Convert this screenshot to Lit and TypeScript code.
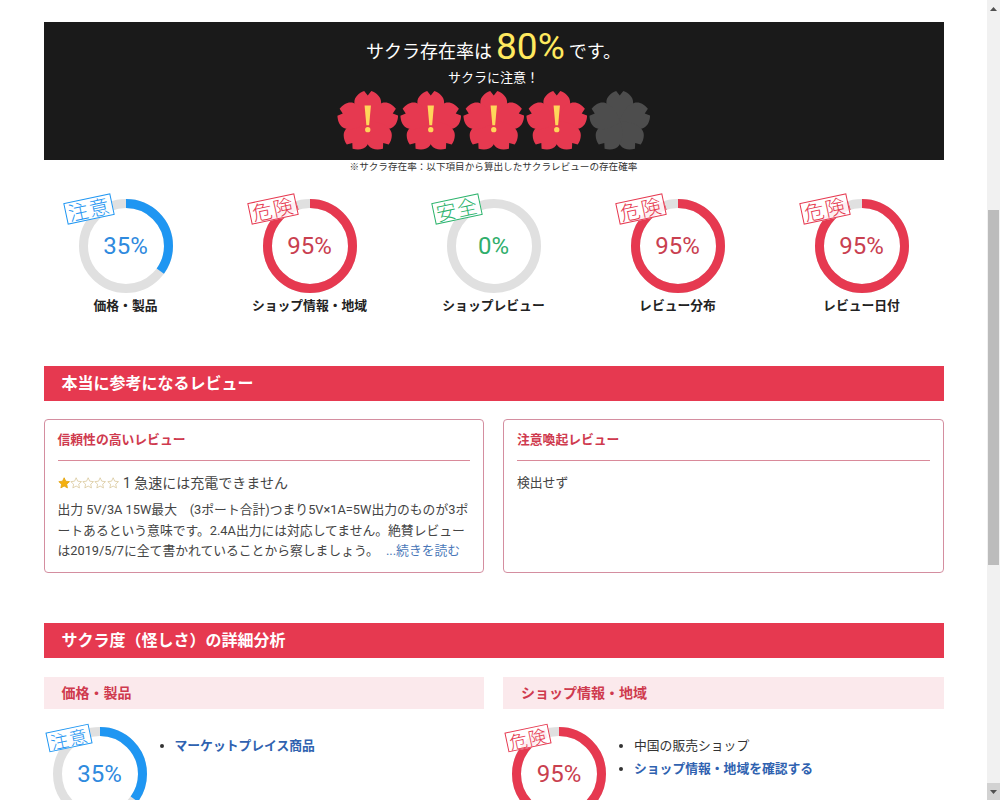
import { LitElement, html, css, svg } from 'lit';
import { customElement, property } from 'lit/decorators.js';

type Level = 'caution' | 'danger' | 'safe';

const LEVEL_LABEL: Record<Level, string> = {
  caution: '注意',
  danger: '危険',
  safe: '安全',
};

const SCORES: { label: string; value: number; level: Level }[] = [
  { label: '価格・製品', value: 35, level: 'caution' },
  { label: 'ショップ情報・地域', value: 95, level: 'danger' },
  { label: 'ショップレビュー', value: 0, level: 'safe' },
  { label: 'レビュー分布', value: 95, level: 'danger' },
  { label: 'レビュー日付', value: 95, level: 'danger' },
];

const PETAL = 'M0 1C-6-4-13.5-11-13.5-19.5C-13.5-25-9-29-3.6-31L0-26.5L3.6-31C9-29 13.5-25 13.5-19.5C13.5-11 6-4 0 1Z';

@customElement('score-gauge')
export class ScoreGauge extends LitElement {
  @property({ type: Number }) value = 0;
  @property({ type: String }) level: Level = 'safe';
  @property({ type: Boolean, reflect: true }) small = false;

  static styles = css`
    :host {
      display: block;
      width: 94px;
      height: 94px;
      position: relative;
      --accent: #2cb36c;
      --text: #2fae6b;
    }
    :host([level='caution']) {
      --accent: #1f96f2;
      --text: #2f8ade;
    }
    :host([level='danger']) {
      --accent: #e63950;
      --text: #c9404f;
    }
    .dial {
      display: grid;
      place-items: center;
      width: 94px;
      height: 94px;
    }
    .dial > * {
      grid-area: 1 / 1;
    }
    svg {
      display: block;
    }
    .track {
      stroke: #e0e0e0;
    }
    .arc {
      stroke: var(--accent);
    }
    .num {
      font-size: 24px;
      color: var(--text);
    }
    .stamp {
      position: absolute;
      left: -14px;
      top: -1px;
      width: 48px;
      height: 22px;
      box-sizing: border-box;
      border: 1px solid var(--accent);
      background: rgba(255, 255, 255, 0.92);
      color: var(--accent);
      font-size: 20px;
      font-weight: 300;
      line-height: 20px;
      text-align: center;
      letter-spacing: 1px;
      transform: rotate(-12deg);
      font-family: 'Noto Sans CJK JP', sans-serif;
    }
    :host([small]) .stamp {
      left: -6px;
      top: 1px;
      width: 44px;
      height: 20px;
      font-size: 18px;
      line-height: 18px;
    }
  `;

  render() {
    const len = 2 * Math.PI * 42.5;
    return html`
      <div class="dial">
        <svg width="94" height="94" viewBox="0 0 94 94" fill="none" stroke-width="9">
          <circle class="track" cx="47" cy="47" r="42.5"></circle>
          <circle
            class="arc"
            cx="47"
            cy="47"
            r="42.5"
            transform="rotate(-90 47 47)"
            stroke-dasharray="${(len * this.value) / 100} ${len}"
          ></circle>
        </svg>
        <span class="num">${this.value}%</span>
      </div>
      <div class="stamp">${LEVEL_LABEL[this.level]}</div>
    `;
  }
}

@customElement('app-root')
export class AppRoot extends LitElement {
  static styles = css`
    :host {
      display: flex;
      height: 800px;
      overflow: hidden;
      background: #fff;
      color: #333;
      font-family: Roboto, 'Noto Sans CJK JP', sans-serif;
      font-size: 12.8px;
    }
    .page {
      flex: 1;
      min-width: 0;
      overflow: hidden;
    }
    .inner {
      width: 900px;
      margin: 0 auto;
      padding-top: 22px;
    }
    .scrollbar {
      width: 13px;
      flex: none;
      display: flex;
      flex-direction: column;
      background: #f1f1f1;
    }
    .sb-btn {
      height: 17px;
      display: flex;
      align-items: center;
      justify-content: center;
      flex: none;
    }
    .sb-btn.down {
      background: #d2d2d2;
    }
    .sb-track {
      flex: 1;
      padding: 193px 1px 0;
    }
    .sb-thumb {
      height: 355px;
      background: #bcbcbc;
    }

    .banner {
      background: #1a1a1a;
      height: 138px;
      box-sizing: border-box;
      padding-top: 4px;
      color: #fff;
      text-align: center;
    }
    .headline {
      font-size: 18px;
      line-height: 42px;
      height: 42px;
    }
    .headline b {
      font-size: 37px;
      font-weight: 400;
      color: #ffe95f;
      margin: 0 4px;
      vertical-align: -1px;
    }
    .verdict {
      font-size: 13px;
      line-height: 20px;
    }
    .flowers {
      display: flex;
      justify-content: center;
      gap: 1.5px;
      margin-top: 3px;
    }
    .flowers svg {
      display: block;
    }
    .note {
      font-size: 9.6px;
      line-height: 13px;
      text-align: center;
      color: #333;
    }

    .scores {
      display: grid;
      grid-template-columns: repeat(5, 1fr);
      margin: 26px -10px 0;
    }
    .score {
      display: flex;
      flex-direction: column;
      align-items: center;
    }
    .score-label {
      margin-top: 6px;
      font-weight: 700;
      line-height: 14px;
      color: #222;
    }

    h2 {
      margin: 0;
      background: #e63950;
      color: #fff;
      font-size: 16px;
      font-weight: 700;
      line-height: 35px;
      padding-left: 18px;
    }
    .reviews-head {
      margin-top: 53px;
    }
    .detail-head {
      margin-top: 50px;
    }
    .two {
      display: grid;
      grid-template-columns: 1fr 1fr;
      gap: 19px;
    }
    .cards {
      margin-top: 18px;
    }
    .card {
      border: 1px solid #d48ea0;
      border-radius: 4px;
      height: 154px;
      box-sizing: border-box;
      padding: 0 13px;
    }
    .card h3 {
      margin: 0;
      font-size: 12.8px;
      font-weight: 700;
      color: #cf3a4e;
      line-height: 40px;
      border-bottom: 1px solid #d98a9a;
    }
    .review-title {
      display: flex;
      align-items: center;
      gap: 4px;
      margin-top: 11px;
      font-size: 14px;
      line-height: 22px;
      color: #444;
    }
    .stars {
      display: flex;
    }
    .stars svg {
      display: block;
    }
    .review-body {
      margin: 6px 0 0;
      line-height: 20.5px;
      color: #444;
    }
    .review-body a {
      color: #4a77b8;
      text-decoration: none;
      margin-left: 4px;
    }
    .none {
      margin: 11px 0 0;
      line-height: 22px;
      color: #444;
    }

    .details {
      margin-top: 19px;
    }
    .detail-title {
      background: #fbe9ec;
      color: #cf3a4e;
      font-size: 14px;
      font-weight: 700;
      line-height: 32px;
      padding-left: 18px;
    }
    .detail-body {
      display: flex;
      gap: 10px;
      padding: 18px 0 0 9px;
    }
    ul {
      margin: 7px 0 0;
      padding: 0 0 0 18px;
      list-style: disc;
      line-height: 23px;
    }
    ul a {
      color: #2f62b0;
      font-weight: 700;
      text-decoration: none;
    }
  `;

  flower(on: boolean) {
    const angles = [0, 72, 144, 216, 288];
    return html`<svg width="61.5" height="59" viewBox="-31 -31 62 59.5">
      ${angles.map(
        (a) => svg`<path d=${PETAL} transform="rotate(${a})" fill=${on ? '#e63950' : '#4d4d4d'}></path>`
      )}
      ${on
        ? svg`<path d="M-3.2-16.5H3.2L1.4 3.5H-1.4Z" fill="#ffd65a"></path>
            <circle cy="8" r="2.7" fill="#ffd65a"></circle>`
        : ''}
    </svg>`;
  }

  star(filled: boolean) {
    return html`<svg width="12.3" height="12" viewBox="0 0 24 24">
      <path
        d="M12 1.5l3.2 6.9 7.5.9-5.6 5.1 1.5 7.4L12 18.1l-6.6 3.7 1.5-7.4-5.6-5.1 7.5-.9z"
        fill=${filled ? '#f4b00f' : '#fff'}
        stroke=${filled ? '#e2a20c' : '#d9c89c'}
        stroke-width="1.6"
      ></path>
    </svg>`;
  }

  render() {
    return html`
      <div class="page">
        <div class="inner">
          <section class="banner">
            <div class="headline">サクラ存在率は<b>80%</b>です。</div>
            <div class="verdict">サクラに注意！</div>
            <div class="flowers">${[1, 1, 1, 1, 0].map((f) => this.flower(!!f))}</div>
          </section>
          <div class="note">※サクラ存在率：以下項目から算出したサクラレビューの存在確率</div>

          <div class="scores">
            ${SCORES.map(
              (s) => html`
                <div class="score">
                  <score-gauge .value=${s.value} level=${s.level}></score-gauge>
                  <div class="score-label">${s.label}</div>
                </div>
              `
            )}
          </div>

          <h2 class="reviews-head">本当に参考になるレビュー</h2>
          <div class="two cards">
            <div class="card">
              <h3>信頼性の高いレビュー</h3>
              <div class="review-title">
                <span class="stars">${[1, 0, 0, 0, 0].map((f) => this.star(!!f))}</span>
                <span>1 急速には充電できません</span>
              </div>
              <p class="review-body">
                出力 5V/3A 15W最大　(3ポート合計)つまり5V×1A=5W出力のものが3ポートあるという意味です。2.4A出力には対応してません。絶賛レビューは2019/5/7に全て書かれていることから察しましょう。
                <a href="#">...続きを読む</a>
              </p>
            </div>
            <div class="card">
              <h3>注意喚起レビュー</h3>
              <p class="none">検出せず</p>
            </div>
          </div>

          <h2 class="detail-head">サクラ度（怪しさ）の詳細分析</h2>
          <div class="two details">
            <div>
              <div class="detail-title">価格・製品</div>
              <div class="detail-body">
                <score-gauge small .value=${35} level="caution"></score-gauge>
                <ul>
                  <li><a href="#">マーケットプレイス商品</a></li>
                </ul>
              </div>
            </div>
            <div>
              <div class="detail-title">ショップ情報・地域</div>
              <div class="detail-body">
                <score-gauge small .value=${95} level="danger"></score-gauge>
                <ul>
                  <li>中国の販売ショップ</li>
                  <li><a href="#">ショップ情報・地域を確認する</a></li>
                </ul>
              </div>
            </div>
          </div>
        </div>
      </div>
      <div class="scrollbar">
        <div class="sb-btn">
          <svg width="7" height="4" viewBox="0 0 7 4"><path d="M3.5 0L7 4H0Z" fill="#505050"></path></svg>
        </div>
        <div class="sb-track"><div class="sb-thumb"></div></div>
        <div class="sb-btn down">
          <svg width="7" height="4" viewBox="0 0 7 4"><path d="M0 0H7L3.5 4Z" fill="#505050"></path></svg>
        </div>
      </div>
    `;
  }
}
